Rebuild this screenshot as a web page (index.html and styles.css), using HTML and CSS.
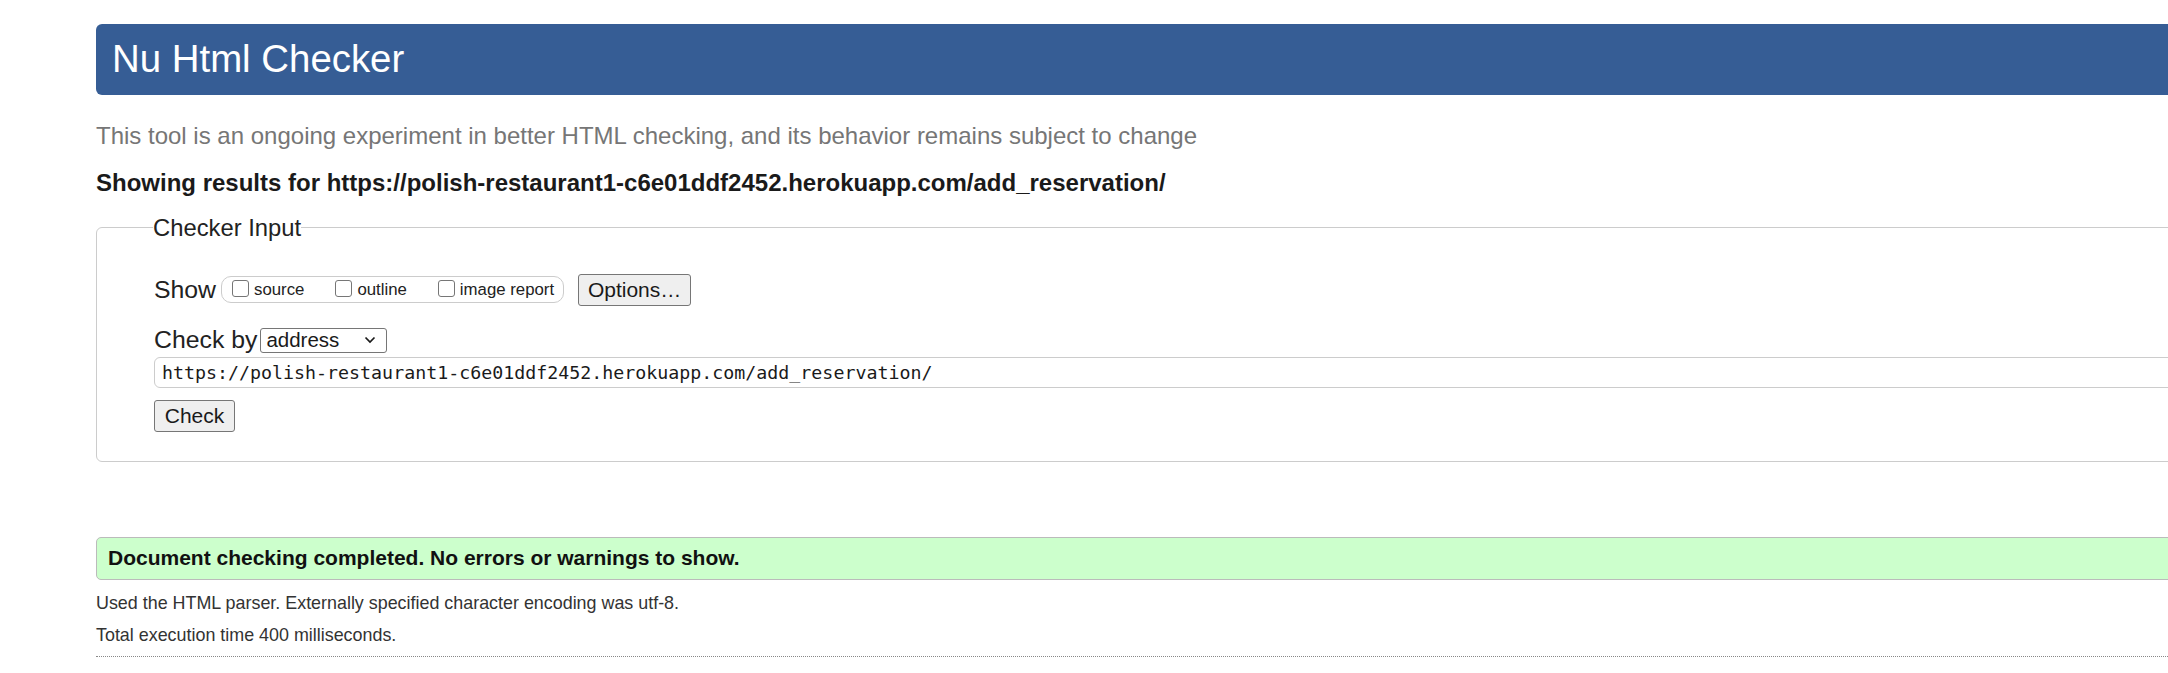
FILE: index.html
```html
<!DOCTYPE html>
<html lang="en">
<head>
<meta charset="utf-8">
<title>Nu Html Checker</title>
<link rel="stylesheet" href="styles.css">
</head>
<body>
<div class="page">
  <h1 class="title">Nu Html Checker</h1>
  <p class="about">This tool is an ongoing experiment in better HTML checking, and its behavior remains subject to change</p>
  <p class="showing">Showing results for https://polish-restaurant1-c6e01ddf2452.herokuapp.com/add_reservation/</p>
  <form class="form">
    <fieldset class="input-box">
      <legend class="legend">Checker Input</legend>
      <div class="row show-row">
        <span class="label">Show</span>
        <span class="show-group">
          <label class="opt"><span class="cb"></span>source</label>
          <label class="opt"><span class="cb"></span>outline</label>
          <label class="opt"><span class="cb"></span>image report</label>
        </span>
        <button type="button" class="btn options">Options…</button>
      </div>
      <div class="row by-row">
        <span class="label">Check by</span>
        <span class="select"><span>address</span><svg class="chev" width="12" height="8" viewBox="0 0 12 8"><polyline points="1.5,1.5 6,6 10.5,1.5" fill="none" stroke="#1a1a1a" stroke-width="1.7"/></svg></span>
      </div>
      <div class="url">https://polish-restaurant1-c6e01ddf2452.herokuapp.com/add_reservation/</div>
      <button type="button" class="btn check">Check</button>
    </fieldset>
  </form>
  <div class="success">Document checking completed. No errors or warnings to show.</div>
  <p class="details first">Used the HTML parser. Externally specified character encoding was utf-8.</p>
  <p class="details">Total execution time 400 milliseconds.</p>
  <hr class="sep">
</div>
</body>
</html>
```

FILE: styles.css
```css
html, body {
  margin: 0;
  padding: 0;
  overflow: hidden;
  background: #ffffff;
}

body {
  font-family: "Liberation Sans", Arial, sans-serif;
  color: #222222;
}

.page {
  width: 2300px;
  padding: 24px 0 0 96px;
}

.title {
  margin: 0;
  height: 71px;
  background: #365d95;
  color: #ffffff;
  font-size: 38.4px;
  font-weight: normal;
  line-height: 1;
  border-radius: 6px 0 0 6px;
  padding-left: 16px;
  display: flex;
  align-items: center;
}

.about {
  margin: 27px 0 0;
  font-size: 24px;
  line-height: 28px;
  color: #767676;
}

.showing {
  margin: 19px 0 0;
  font-size: 24px;
  line-height: 28px;
  font-weight: bold;
  color: #1a1a1a;
}

.form {
  margin: 17px 0 0;
}

.input-box {
  margin: 0;
  min-width: 0;
  border: 1px solid #cccccc;
  border-radius: 6px;
  padding: 32px 0 29px 57px;
}

.legend {
  padding: 0;
  margin-left: -1px;
  font-size: 23.8px;
  line-height: 27.6px;
  color: #222222;
}

.row {
  display: flex;
  align-items: center;
}

.show-row {
  height: 32px;
}

.label {
  font-size: 24.8px;
  color: #222222;
}

.show-group {
  margin-left: 5px;
  height: 27px;
  box-sizing: border-box;
  border: 1px solid #cccccc;
  border-radius: 10px;
  padding: 0 9px 0 10px;
  display: flex;
  align-items: center;
}

.opt {
  display: flex;
  align-items: center;
  font-size: 16.8px;
  color: #222222;
}

.opt + .opt {
  margin-left: 31px;
}

.cb {
  width: 15px;
  height: 15px;
  border: 1px solid #767676;
  border-radius: 3px;
  margin: 0 5px 3px 0;
  background: #ffffff;
}

.btn {
  font-family: "Liberation Sans", Arial, sans-serif;
  font-size: 21px;
  color: #1a1a1a;
  background: #efefef;
  border: 1px solid #767676;
  border-radius: 3px;
  padding: 0;
  height: 32px;
  box-sizing: border-box;
}

.options {
  margin-left: 14px;
  width: 113px;
}

.by-row {
  margin-top: 22px;
  height: 25px;
}

.select {
  margin-left: 3px;
  width: 127px;
  height: 25px;
  box-sizing: border-box;
  border: 1px solid #767676;
  border-radius: 3px;
  padding: 0 10px 0 5px;
  display: flex;
  align-items: center;
  justify-content: space-between;
  font-size: 20.5px;
  color: #1a1a1a;
}

.chev {
  display: block;
}

.url {
  margin-top: 4px;
  height: 31px;
  box-sizing: border-box;
  border: 1px solid #cccccc;
  border-radius: 6px;
  padding-left: 7px;
  display: flex;
  align-items: center;
  font-family: "DejaVu Sans Mono", "Liberation Mono", monospace;
  font-size: 18.3px;
  color: #1a1a1a;
}

.check {
  display: block;
  margin-top: 12px;
  width: 81px;
}

.success {
  margin-top: 75px;
  height: 43px;
  box-sizing: border-box;
  border: 1px solid #bbbbbb;
  border-radius: 5px;
  background: #ccffcc;
  padding-left: 11px;
  display: flex;
  align-items: center;
  font-size: 21px;
  font-weight: bold;
  color: #111111;
}

.details {
  margin: 0;
  font-size: 17.9px;
  line-height: 32px;
  color: #333333;
}

.details.first {
  margin-top: 7px;
}

.sep {
  margin: 5px 0 0;
  border: 0;
  border-top: 1px dotted #888888;
  height: 0;
}
```
